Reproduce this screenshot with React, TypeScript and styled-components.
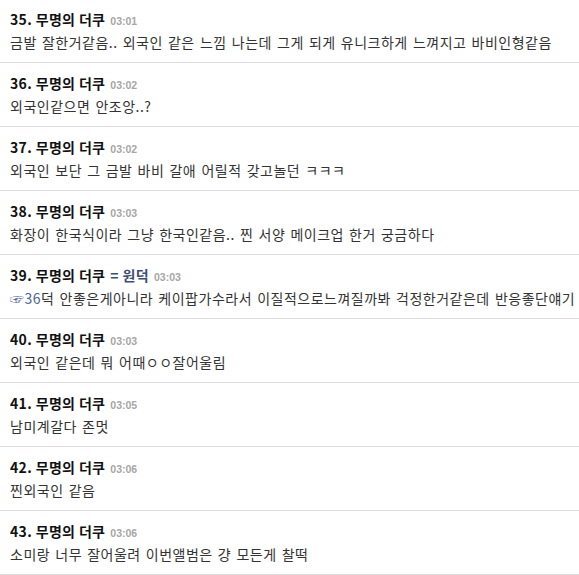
import React from "react";
import styled, { createGlobalStyle } from "styled-components";

const GlobalStyle = createGlobalStyle`
  html, body {
    margin: 0;
    padding: 0;
    background: #ffffff;
    overflow: hidden;
  }
  body {
    font-family: "Noto Sans CJK KR", "Noto Sans", "Liberation Sans", sans-serif;
  }
`;

const List = styled.ul`
  list-style: none;
  margin: -1px 0 0 0;
  padding: 0;
  width: 579px;
`;

const Row = styled.li`
  display: flex;
  flex-direction: column;
  padding: 10px 0 9px 10px;
  border-bottom: 1px solid #dddddd;
  overflow: hidden;
`;

const Header = styled.div`
  display: flex;
  align-items: baseline;
  gap: 5px;
  height: 20px;
  line-height: 20px;
  font-size: 14px;
  font-weight: 700;
  letter-spacing: 0.35px;
  color: #111111;
  white-space: nowrap;
`;

const Nick = styled.span`
  color: #3d4e76;
  font-weight: 700;
`;

const Time = styled.span`
  font-size: 10.5px;
  font-weight: 700;
  letter-spacing: 0;
  color: #a6a6a6;
  font-family: "Liberation Sans", "Noto Sans", sans-serif;
`;

const Body = styled.div`
  margin-top: 3px;
  height: 21px;
  line-height: 21px;
  font-size: 14px;
  letter-spacing: 0.5px;
  word-spacing: 1.5px;
  color: #333333;
  white-space: nowrap;
  overflow: hidden;
`;

const Ref = styled.span`
  color: #4b6593;
`;

type Comment = {
  no: number;
  time: string;
  nick?: string;
  refText?: string;
  text: string;
};

const comments: Comment[] = [
  { no: 35, time: "03:01", text: "금발 잘한거같음.. 외국인 같은 느낌 나는데 그게 되게 유니크하게 느껴지고 바비인형같음" },
  { no: 36, time: "03:02", text: "외국인같으면 안조앙..?" },
  { no: 37, time: "03:02", text: "외국인 보단 그 금발 바비 갈애 어릴적 갖고놀던 ㅋㅋㅋ" },
  { no: 38, time: "03:03", text: "화장이 한국식이라 그냥 한국인같음.. 찐 서양 메이크업 한거 궁금하다" },
  {
    no: 39,
    time: "03:03",
    nick: "= 원덕",
    refText: "☞36",
    text: "덕 안좋은게아니라 케이팝가수라서 이질적으로느껴질까봐 걱정한거같은데 반응좋단얘기",
  },
  { no: 40, time: "03:03", text: "외국인 같은데 뭐 어때ㅇㅇ잘어울림" },
  { no: 41, time: "03:05", text: "남미계갈다 존멋" },
  { no: 42, time: "03:06", text: "찐외국인 같음" },
  { no: 43, time: "03:06", text: "소미랑 너무 잘어울려 이번앨범은 걍 모든게 찰떡" },
];

export default function App() {
  return (
    <>
      <GlobalStyle />
      <List>
        {comments.map((c) => (
          <Row key={c.no}>
            <Header>
              <span>{c.no}. 무명의 더쿠</span>
              {c.nick && <Nick>{c.nick}</Nick>}
              <Time>{c.time}</Time>
            </Header>
            <Body>
              {c.refText && <Ref>{c.refText}</Ref>}
              {c.text}
            </Body>
          </Row>
        ))}
      </List>
    </>
  );
}
